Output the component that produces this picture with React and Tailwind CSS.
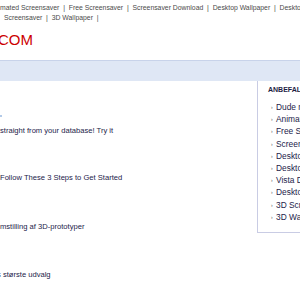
export default function App() {
  const items = [
    "Dude m",
    "Animat",
    "Free Sc",
    "Screens",
    "Desktop",
    "Desktop",
    "Vista De",
    "Desktop",
    "3D Scre",
    "3D Wall",
  ];
  return (
    <div
      className="w-[300px] h-[300px] overflow-hidden bg-white relative"
      style={{ fontFamily: '"Liberation Sans", Arial, Helvetica, sans-serif' }}
    >
      <div className="text-[6.85px] leading-[10px] text-[#4a4a4a] whitespace-nowrap pt-[3px]">
        <div>mated Screensaver&nbsp;&nbsp;|&nbsp;&nbsp;Free Screensaver&nbsp;&nbsp;|&nbsp;&nbsp;Screensaver Download&nbsp;&nbsp;|&nbsp;&nbsp;Desktop Wallpaper&nbsp;&nbsp;|&nbsp;&nbsp;Desktop</div>
        <div className="pl-[2px]">&nbsp;Screensaver&nbsp;&nbsp;|&nbsp;&nbsp;3D Wallpaper&nbsp;&nbsp;|</div>
      </div>
      <div className="text-[15px] leading-[18px] text-[#cc0000] mt-[8px] -ml-[2px] whitespace-nowrap">
        COM
      </div>
      <div className="mt-[11px] h-[21px] bg-[#dfe7f5] border-t border-[#c8d3ea]"></div>
      <div className="flex">
        <div className="w-[257px] shrink-0 text-[7.6px] leading-[10px] text-[#23234a] whitespace-nowrap">
          <div className="pt-[34px] h-[36px]">
            <div className="w-[2px] h-[2px] rounded-full bg-[#9ab8e0]"></div>
          </div>
          <div className="mt-[9px]">straight from your database! Try it</div>
          <div className="mt-[37px]">Follow These 3 Steps to Get Started</div>
          <div className="mt-[39px]">mstilling af 3D-prototyper</div>
          <div className="mt-[38px] -ml-[3px]">s største udvalg</div>
        </div>
        <div className="flex-1 min-w-0 h-[152px] border-l border-b border-[#c9cce4] pl-[10px] pt-[4px] whitespace-nowrap overflow-hidden">
          <div className="text-[7px] leading-[10px] font-bold text-[#1e1e44]">ANBEFALEDE</div>
          <div className="mt-[6px]">
            {items.map((t, i) => (
              <div key={i} className="flex items-center text-[8.4px] leading-[12.2px] text-[#23234a]">
                <span className="shrink-0 text-[5px] w-[5px] ml-[3px] text-[#555]">›</span>
                <span className="shrink-0">{t}</span>
              </div>
            ))}
          </div>
        </div>
      </div>
    </div>
  );
}
